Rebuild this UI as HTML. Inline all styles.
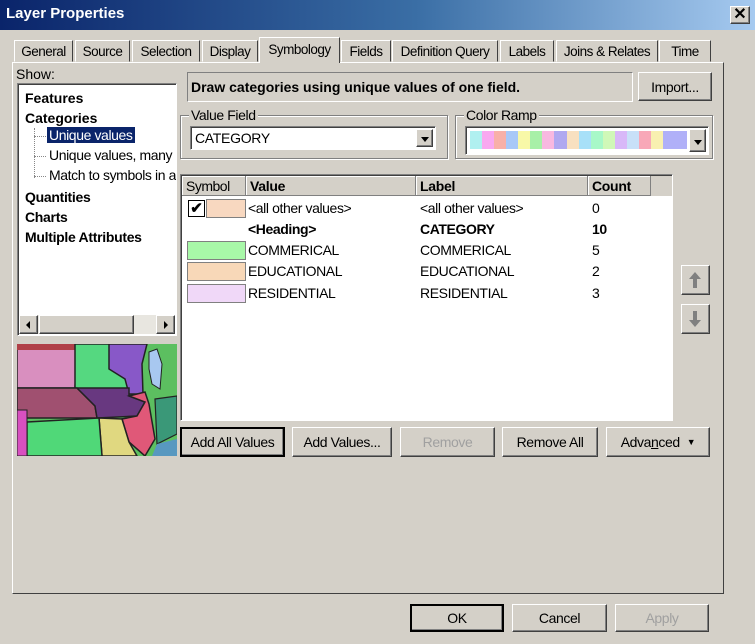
<!DOCTYPE html>
<html><head><style>
*{box-sizing:border-box}
body{margin:0;width:755px;height:644px;background:#d4d0c8;font-family:"Liberation Sans",sans-serif;font-size:13px;color:#000;position:relative;overflow:hidden}
.a{position:absolute}
.raised{background:#d4d0c8;border:1px solid;border-color:#fff #404040 #404040 #fff;box-shadow:inset -1px -1px 0 #808080}
.sunk{background:#fff;border:1px solid;border-color:#808080 #fff #fff #808080;box-shadow:inset 1px 1px 0 #404040}
.btn{display:flex;align-items:center;justify-content:center;font-size:14px;letter-spacing:-0.4px;white-space:nowrap}
.tab{position:absolute;top:40px;height:22px;border:1px solid;border-color:#fff #404040 transparent #fff;font-size:13.5px;letter-spacing:-0.5px;padding:3px 0 0 0;text-align:center;white-space:nowrap;background:#d4d0c8}
.grp{position:absolute;border:1px solid #808080;box-shadow:1px 1px 0 #fff, inset 1px 1px 0 #fff}
.gl{position:absolute;top:-9px;left:8px;background:#d4d0c8;padding:0 2px;font-size:14px;letter-spacing:-0.4px}
.hd{position:absolute;top:0;height:20px;border-right:1px solid #808080;border-bottom:1px solid #808080;padding:2px 4px;font-size:14px;background:#d4d0c8;box-shadow:inset 1px 1px 0 #fff;letter-spacing:-0.3px}
.row{position:absolute;font-size:14px;letter-spacing:-0.4px;white-space:nowrap}
.sw{position:absolute;width:57px;height:19px;border:1px solid #808080}
.dd{position:absolute;right:2px;top:2px;bottom:2px;width:17px}
.tri{width:0;height:0;border-left:4px solid transparent;border-right:4px solid transparent;border-top:5px solid #000;margin:auto;margin-top:7px}
</style></head><body>
<div class="a" style="left:0;top:0;width:755px;height:30px;background:linear-gradient(90deg,#0a246a,#3a6ea5 55%,#a6caf0);"></div>
<div class="a" style="left:6px;top:5px;color:#fff;font-weight:bold;font-size:15px">Layer Properties</div>
<div class="a raised" style="left:730px;top:6px;width:20px;height:18px;font-size:16px;font-weight:bold;line-height:15px;text-align:center">✕</div>

<div class="a" style="left:12px;top:62px;width:712px;height:532px;border:1px solid;border-color:#fff #404040 #404040 #fff"></div>
<div class="tab" style="left:14px;width:59px">General</div>
<div class="tab" style="left:75px;width:55px">Source</div>
<div class="tab" style="left:132px;width:68px">Selection</div>
<div class="tab" style="left:202px;width:56px">Display</div>
<div class="tab" style="left:259px;top:37px;height:26px;width:81px;padding-top:4px;border-bottom:none">Symbology</div>
<div class="tab" style="left:341px;width:50px">Fields</div>
<div class="tab" style="left:392px;width:106px">Definition Query</div>
<div class="tab" style="left:500px;width:54px">Labels</div>
<div class="tab" style="left:556px;width:102px">Joins &amp; Relates</div>
<div class="tab" style="left:659px;width:52px">Time</div>

<div class="a" style="left:16px;top:66px;font-size:14px">Show:</div>
<div class="a sunk" style="left:17px;top:83px;width:160px;height:253px;overflow:hidden">
 <div class="a" style="left:7px;top:4px;font-weight:bold;font-size:14px;line-height:20px">Features<br>Categories</div>
 <div class="a" style="left:16px;top:44px;border-left:1px dotted #888;height:50px"></div>
 <div class="a" style="left:16px;top:52px;width:12px;border-top:1px dotted #888"></div>
 <div class="a" style="left:16px;top:72px;width:12px;border-top:1px dotted #888"></div>
 <div class="a" style="left:16px;top:92px;width:12px;border-top:1px dotted #888"></div>
 <div class="a" style="left:29px;top:43px;background:#0a246a;color:#fff;font-size:14px;padding:0 2px;letter-spacing:-0.4px">Unique values</div>
 <div class="a" style="left:31px;top:63px;font-size:14px;white-space:nowrap;letter-spacing:-0.4px">Unique values, many</div>
 <div class="a" style="left:31px;top:83px;font-size:14px;white-space:nowrap;letter-spacing:-0.4px">Match to symbols in a</div>
 <div class="a" style="left:7px;top:103px;font-weight:bold;font-size:14px;line-height:20px;white-space:nowrap;letter-spacing:-0.3px">Quantities<br>Charts<br>Multiple Attributes</div>
 <div class="a" style="left:1px;top:231px;width:156px;height:19px;background:#e8e6e0">
  <div class="a raised" style="left:0;top:0;width:19px;height:19px"><div style="width:0;height:0;border-top:4px solid transparent;border-bottom:4px solid transparent;border-right:4px solid #000;margin:5px 0 0 6px"></div></div>
  <div class="a raised" style="left:20px;top:0;width:95px;height:19px"></div>
  <div class="a raised" style="left:137px;top:0;width:19px;height:19px"><div style="width:0;height:0;border-top:4px solid transparent;border-bottom:4px solid transparent;border-left:4px solid #000;margin:5px 0 0 7px"></div></div>
 </div>
</div>
<svg class="a" style="left:17px;top:344px" width="160" height="112" viewBox="0 0 160 112">
<rect width="160" height="112" fill="#5cbf60"/>
<polygon points="0,0 58,0 60,8 58,44 0,44" fill="#d98fbf" stroke="#222" stroke-width="1.5"/>
<polygon points="0,0 58,0 58,6 0,6" fill="#b04048"/>
<polygon points="58,0 105,0 108,35 118,40 118,50 60,50 58,44" fill="#55d880" stroke="#222" stroke-width="1.5"/>
<polygon points="92,0 130,0 125,20 126,50 112,50 108,35 92,25" fill="#8858c8" stroke="#222" stroke-width="1.5"/>
<polygon points="132,8 140,5 145,20 143,45 135,40 132,25" fill="#a8c8f0" stroke="#222" stroke-width="1"/>
<polygon points="0,44 60,44 78,62 80,74 0,74" fill="#a05070" stroke="#222" stroke-width="1.5"/>
<polygon points="60,44 112,44 112,52 128,58 120,72 80,74 78,62" fill="#683880" stroke="#222" stroke-width="1.5"/>
<polygon points="112,52 128,48 132,60 138,95 128,112 112,98 105,75 120,72 128,58" fill="#e05878" stroke="#222" stroke-width="1.5"/>
<polygon points="138,55 160,52 160,90 140,100" fill="#3a9878" stroke="#222" stroke-width="1.2"/>
<polygon points="140,100 160,95 160,112 135,112" fill="#5898c0"/>
<polygon points="82,74 105,75 112,98 120,112 85,112" fill="#e0d880" stroke="#222" stroke-width="1.5"/>
<polygon points="10,78 82,74 85,112 10,112" fill="#50d878" stroke="#222" stroke-width="1.5"/>
<polygon points="0,66 10,66 10,112 0,112" fill="#d850c0" stroke="#222" stroke-width="1"/>
</svg>

<div class="a" style="left:187px;top:72px;width:446px;height:30px;border:1px solid;border-color:#808080 #fff #fff #808080;font-weight:bold;font-size:14px;padding:6px 3px">Draw categories using unique values of one field.</div>
<div class="a raised btn" style="left:638px;top:72px;width:74px;height:29px">Import...</div>

<div class="grp" style="left:180px;top:115px;width:268px;height:44px"><span class="gl">Value Field</span></div>
<div class="a sunk" style="left:190px;top:126px;width:246px;height:24px;font-size:14px;padding:3px 4px;letter-spacing:-0.3px">CATEGORY<div class="dd raised"><div class="tri"></div></div></div>
<div class="grp" style="left:455px;top:115px;width:258px;height:44px"><span class="gl">Color Ramp</span></div>
<div class="a sunk" style="left:465px;top:126px;width:244px;height:29px;padding:4px 4px">
 <div style="display:flex;height:18px;width:217px">
 <i style="flex:1;background:#b0f0f0"></i><i style="flex:1;background:#f8a8f0"></i><i style="flex:1;background:#f8b0a8"></i><i style="flex:1;background:#a8c8f8"></i><i style="flex:1;background:#f8f8a8"></i><i style="flex:1;background:#a8f0a8"></i><i style="flex:1;background:#f8b8e0"></i><i style="flex:1;background:#b0a8f0"></i><i style="flex:1;background:#f8e0c0"></i><i style="flex:1;background:#a8e0f8"></i><i style="flex:1;background:#a8f8c8"></i><i style="flex:1;background:#d0f8b8"></i><i style="flex:1;background:#d8b8f8"></i><i style="flex:1;background:#c8e0f8"></i><i style="flex:1;background:#f8a8b8"></i><i style="flex:1;background:#f8f0b0"></i><i style="flex:2;background:#b0b0f8"></i></div>
 <div class="dd raised"><div class="tri" style="margin-top:10px"></div></div>
</div>

<div class="a sunk" style="left:180px;top:174px;width:493px;height:247px;overflow:hidden">
 <div class="a" style="left:1px;top:1px;width:490px;height:20px;background:#d4d0c8"></div>
 <div class="hd" style="left:1px;width:64px;top:1px;letter-spacing:-0.5px">Symbol</div>
 <div class="hd" style="left:65px;width:170px;top:1px;font-weight:bold">Value</div>
 <div class="hd" style="left:235px;width:172px;top:1px;font-weight:bold">Label</div>
 <div class="hd" style="left:407px;width:63px;top:1px;font-weight:bold">Count</div>
 <div class="a" style="left:7px;top:25px;width:17px;height:17px;border:1px solid #000;background:#fff;font-size:15px;font-weight:bold;line-height:15px;text-align:center">✔</div>
 <div class="sw" style="left:25px;top:24px;width:40px;background:#f8d8c0"></div>
 <div class="sw" style="left:6px;top:66px;width:59px;background:#a8f8a8"></div>
 <div class="sw" style="left:6px;top:87px;width:59px;background:#f8d8b8"></div>
 <div class="sw" style="left:6px;top:109px;width:59px;background:#f0d8f8"></div>
 <div class="row" style="left:67px;top:25px">&lt;all other values&gt;</div>
 <div class="row" style="left:67px;top:46px;font-weight:bold">&lt;Heading&gt;</div>
 <div class="row" style="left:67px;top:67px">COMMERICAL</div>
 <div class="row" style="left:67px;top:88px">EDUCATIONAL</div>
 <div class="row" style="left:67px;top:110px">RESIDENTIAL</div>
 <div class="row" style="left:239px;top:25px">&lt;all other values&gt;</div>
 <div class="row" style="left:239px;top:46px;font-weight:bold">CATEGORY</div>
 <div class="row" style="left:239px;top:67px">COMMERICAL</div>
 <div class="row" style="left:239px;top:88px">EDUCATIONAL</div>
 <div class="row" style="left:239px;top:110px">RESIDENTIAL</div>
 <div class="row" style="left:411px;top:25px">0</div>
 <div class="row" style="left:411px;top:46px;font-weight:bold">10</div>
 <div class="row" style="left:411px;top:67px">5</div>
 <div class="row" style="left:411px;top:88px">2</div>
 <div class="row" style="left:411px;top:110px">3</div>
</div>
<div class="a raised" style="left:681px;top:265px;width:29px;height:30px"><svg width="27" height="28"><path d="M13 6 L7 13 H11 V22 H15 V13 H19 Z" fill="#808080"/></svg></div>
<div class="a raised" style="left:681px;top:304px;width:29px;height:30px"><svg width="27" height="28"><path d="M13 22 L7 15 H11 V6 H15 V15 H19 Z" fill="#808080"/></svg></div>

<div class="a raised btn" style="left:180px;top:427px;width:105px;height:30px;border:2px solid #000">Add All Values</div>
<div class="a raised btn" style="left:292px;top:427px;width:100px;height:30px">Add Values...</div>
<div class="a raised btn" style="left:400px;top:427px;width:95px;height:30px;color:#a0a0a0">Remove</div>
<div class="a raised btn" style="left:502px;top:427px;width:96px;height:30px">Remove All</div>
<div class="a raised btn" style="left:606px;top:427px;width:104px;height:30px">Adva<u>n</u>ced&nbsp;&nbsp;<span style="font-size:9px">▼</span></div>

<div class="a raised btn" style="left:410px;top:604px;width:94px;height:28px;border:2px solid #000">OK</div>
<div class="a raised btn" style="left:512px;top:604px;width:95px;height:28px">Cancel</div>
<div class="a raised btn" style="left:615px;top:604px;width:94px;height:28px;color:#a0a0a0">Apply</div>
</body></html>
